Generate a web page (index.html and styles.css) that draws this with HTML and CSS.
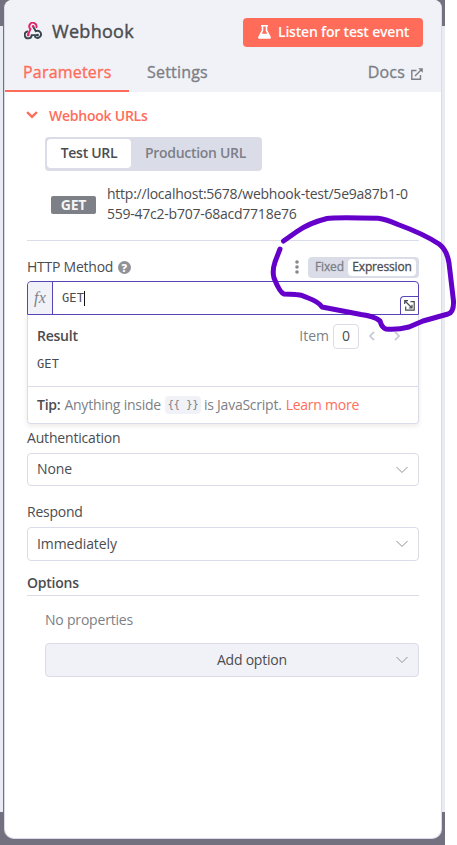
FILE: index.html
```html
<!DOCTYPE html>
<html lang="en">
<head>
<meta charset="utf-8">
<title>Webhook</title>
<link rel="stylesheet" href="styles.css">
</head>
<body>
<div class="backdrop">
<main class="panel">
  <header class="header">
    <div class="title-row">
      <svg class="logo" viewBox="0 0 18 18" fill="none" stroke-width="1.9" stroke-linecap="round">
        <path d="M12.4 5.2A3.6 3.6 0 1 0 6.5 7L4 12.6" stroke="#e0246c"/>
        <path d="M9.1 4.5L11.8 9.2A3.5 3.5 0 1 1 11 14.8" stroke="#37474f"/>
        <path d="M3.3 9.5A3.5 3.5 0 1 0 7.700 13.1H13.4" stroke="#37474f"/>
        <circle cx="9.1" cy="4.3" r="1.2" fill="#e0246c"/><circle cx="4.2" cy="13" r="1.4" fill="#e0246c"/><circle cx="13.6" cy="13.1" r="1.3" fill="#37474f"/>
      </svg>
      <h1>Webhook</h1>
      <button class="listen">
        <svg width="13" height="14" viewBox="0 0 13 14"><path fill="#fff" fill-rule="evenodd" d="M3 0h7v1.5h-.7v3.8l3.3 6.2c.7 1.3.1 2.3-1.1 2.3h-10c-1.2 0-1.8-1-1.1-2.3l3.3-6.2V1.500H3zM5.300 1.500v4.200L3.800 8.700h5.400L7.700 5.700V1.500z"/></svg>
        <span>Listen for test event</span>
      </button>
    </div>
    <nav class="tabs">
      <span class="tab active">Parameters</span>
      <span class="tab">Settings</span>
      <span class="tab docs">Docs
        <svg width="12" height="12" viewBox="0 0 12 12" fill="none" stroke="#7d7f86" stroke-width="1.400"><path d="M5.500 2.500H.8v8.700h8.700V7M4 8l6.300-6.300"/><path d="M7.200.2h4.600v4.600z" fill="#7d7f86" stroke="none"/></svg>
      </span>
    </nav>
  </header>
  <section class="body">
    <div class="urls-title">
      <svg width="12" height="8" viewBox="0 0 12 8" fill="none" stroke="#ff6d5a" stroke-width="2.400"><path d="M1.100 1.200L6 5.800l4.900-4.600"/></svg>
      <span>Webhook URLs</span>
    </div>
    <div class="url-switch"><span class="on">Test URL</span><span>Production URL</span></div>
    <div class="url-row">
      <span class="verb">GET</span>
      <span class="url">http://localhost:5678/webhook-test/5e9a87b1-0<br>559-47c2-b707-68acd7718e76</span>
    </div>
    <div class="method-head">
      <span class="label">HTTP Method</span>
      <span class="help">?</span>
      <svg class="dots" width="4" height="14" viewBox="0 0 4 14" fill="#85878d"><circle cx="2" cy="2" r="1.800"/><circle cx="2" cy="7" r="1.800"/><circle cx="2" cy="12" r="1.800"/></svg>
      <div class="mode"><span>Fixed</span><span class="on">Expression</span></div>
    </div>
    <div class="expr">
      <span class="fx">fx</span>
      <span class="code">GET</span><i class="caret"></i>
      <span class="expand"><svg width="11" height="11" viewBox="0 0 11 11" fill="none" stroke="#4b4c50" stroke-width="1.200"><path d="M1 1l7 7M.7 4V.7H4M6.500 1.700h3.700v8.500H1.700V6.500M8 4.800V8H4.800"/></svg></span>
    </div>
    <div class="result">
      <div class="result-head">
        <b>Result</b><span class="item">Item</span><span class="index">0</span>
        <svg width="8" height="10" viewBox="0 0 8 10" fill="none" stroke="#c4c8d4" stroke-width="1.700"><path d="M6 .8L2 5l4 4.200"/></svg>
        <svg width="8" height="10" viewBox="0 0 8 10" fill="none" stroke="#c4c8d4" stroke-width="1.700"><path d="M2 .8L6 5 2 9.200"/></svg>
      </div>
      <div class="result-value">GET</div>
      <div class="tip"><b>Tip:</b><span>Anything inside</span><code>{{ }}</code><span>is JavaScript.</span><a>Learn more</a></div>
    </div>
    <div class="label auth-label">Authentication</div>
    <div class="select">None<svg class="chev" viewBox="0 0 14 8"><path d="M1.500 1L7 6.500 12.500 1"/></svg></div>
    <div class="label respond-label">Respond</div>
    <div class="select tall">Immediately<svg class="chev" viewBox="0 0 14 8"><path d="M1.500 1L7 6.500 12.500 1"/></svg></div>
    <div class="options-title">Options</div>
    <div class="none">No properties</div>
    <div class="select add"><span>Add option</span><svg class="chev" viewBox="0 0 14 8"><path d="M1.500 1L7 6.500 12.500 1"/></svg></div>
  </section>
</main>
</div>
<svg class="scribble" viewBox="0 0 457 845" fill="none" stroke="#6500cb" stroke-width="5" stroke-linecap="round" stroke-linejoin="round">
  <path d="M283.500 241L297 231.500Q309 223 327 218.500Q334 217 378 218.200Q386 219 398 224.500Q424 234 439 244Q447 250 449 263L453.500 301Q454 312 448 314L423 321L409 327Q397 330 386 329Q382 328 380 321Q374 316 361 314.500L322 307Q319 302 307 297.500Q301 294.500 296 294.500L284 294Q280 293 274 278Q272 271 275 262L280 249"/>
</svg>
</body>
</html>
```
FILE: styles.css
```css
* { box-sizing: border-box; }
body { margin: 0; width: 457px; height: 845px; overflow: hidden; background: #fff; font: 14px/20px "Open Sans", sans-serif; letter-spacing: -.24px; color: #4b4c50; }
.backdrop { width: 445px; height: 845px; padding-left: 4px; background: linear-gradient(#737180 26px, #e9ebf2 26px, #e9ebf2 812px, #737180 812px); }
.panel { width: 438px; height: 839px; border: 1px solid #d9dce8; border-top: 0; border-radius: 8px 8px 10px 10px; background: #fff; overflow: hidden; box-shadow: -1px 0 #737180; }
.header { height: 92px; background: #f1f2f7; }
.title-row { display: flex; align-items: center; height: 63px; padding: 0 18px 0 19px; }
.logo { width: 18px; height: 18px; margin-top: -2px; }
h1 { margin: -2px auto 0 10px; font-size: 18px; line-height: 24px; font-weight: 500; letter-spacing: .3px; -webkit-text-stroke: .4px; }
.listen { display: flex; align-items: center; gap: 7px; width: 180px; height: 29px; margin-top: 1px; padding: 0 0 0 15px; border: 0; border-radius: 4px; background: #ff6d5a; color: #fff; font: 600 14px/20px "Open Sans", sans-serif; letter-spacing: -.2px; white-space: nowrap; }
.tabs { display: flex; height: 29px; font-size: 16px; line-height: 18px; font-weight: 500; letter-spacing: .2px; color: #7d7f86; -webkit-text-stroke: .35px; }
.active { width: 124px; padding-left: 18px; border-bottom: 2px solid #ff6d5a; color: #ff6d5a; }
.tab:nth-child(2) { margin-left: 18px; }
.docs { display: flex; gap: 6px; margin: 0 18px 0 auto; }
.docs svg { margin-top: 5px; }
.body { padding: 14px 22px 0; }
.urls-title { display: flex; align-items: center; gap: 11px; height: 20px; margin-left: -1px; color: #ff6d5a; font-weight: 600; }
.urls-title svg { margin-top: -2px; }
.url-switch { display: flex; width: 217px; height: 34px; margin: 11px 0 0 18px; padding: 2px; border-radius: 4px; background: #dadde8; color: #7d7f88; font-weight: 600; line-height: 27px; letter-spacing: -.3px; }
.url-switch span { flex: 1; text-align: center; }
.url-switch .on { flex: 0 0 84px; border-radius: 4px; background: #fff; color: #4b4c50; height: 29px; }
.url-row { display: flex; align-items: center; gap: 11px; height: 70px; padding: 0 0 3px 24px; border-bottom: 1px solid #dadde8; white-space: nowrap; }
.verb { width: 45px; height: 18px; margin-top: 2px; border-radius: 2px; background: #7d8087; color: #f5f5f5; text-align: center; font-weight: 700; line-height: 18px; }
.method-head { display: flex; align-items: center; height: 40px; padding-top: 12px; }
.help { width: 13px; height: 13px; margin-left: 4.5px; border-radius: 50%; background: #919297; color: #fff; font-size: 11px; font-weight: 800; line-height: 13px; text-align: center; }
.dots { margin-left: auto; margin-right: 9px; }
.mode { display: flex; width: 111px; height: 21px; padding: 2px; border-radius: 4px; background: #dadde8; color: #7d7f86; font-size: 12px; line-height: 16px; font-weight: 500; letter-spacing: -.15px; -webkit-text-stroke: .3px; }
.mode span:first-child { width: 38px; padding-left: 5px; }
.mode .on { width: 68px; border-radius: 4px; background: #fff; color: #4b4c50; text-align: center; }
.expr { position: relative; display: flex; align-items: center; height: 34px; border: 1px solid #5545b8; border-radius: 4px 4px 0 0; }
.fx { width: 25px; height: 32px; border-right: 1px solid #5545b8; background: #f1f2f7; border-radius: 4px 0 0; text-align: center; font: italic 16px/31px "Liberation Serif", serif; letter-spacing: .3px; color: #7d7f86; }
.code { margin-left: 9px; }
.code, .result-value { font-family: "DejaVu Sans Mono", monospace; font-size: 12px; letter-spacing: .1px; }
.caret { width: 1px; height: 15px; background: #111; }
.expand { position: absolute; right: 0; bottom: 0; display: grid; place-items: center; width: 18px; height: 18px; border: 1px solid #5545b8; border-width: 1px 0 0 1px; border-radius: 4px 0 0; }
.result { height: 109px; border: 1px solid #dadde8; border-top: 0; border-radius: 0 0 4px 4px; box-shadow: 0 2px 5px #441c0018; }
.result-head { display: flex; align-items: center; height: 42px; padding: 0 17px 0 9px; }
.result-head b, .tip b, .options-title { font-weight: 600; }
.tip b { color: #4b4c50; }
.item { margin-left: auto; color: #7d7f86; letter-spacing: 0; }
.index { width: 26px; height: 25px; margin: 0 9px 0 4px; border: 1px solid #dadde8; border-radius: 4px; text-align: center; line-height: 22px; }
.result-head svg + svg { margin-left: 17px; }
.result-value { height: 29px; padding-left: 9px; line-height: 14px; }
.tip { display: flex; align-items: center; height: 37px; padding-left: 9px; border-top: 1px solid #dadde8; color: #7d7f86; gap: 4px; white-space: nowrap; }
.tip code { width: 36px; height: 18px; border-radius: 4px; background: #f1f2f7; font: 11px/18px "DejaVu Sans Mono", monospace; letter-spacing: -.4px; text-align: center; }
.tip code + span { margin-left: -1px; }
.tip a { color: #ff6d5a; }
.auth-label { margin-top: 4px; letter-spacing: -.18px; }
.select { display: flex; align-items: center; height: 33px; padding: 0 9px 1px; border: 1px solid #dadde8; border-radius: 4px; letter-spacing: -.1px; }
.auth-label + .select { margin-top: 5px; }
.chev { width: 14px; height: 8px; margin: 1px 0 0 auto; fill: none; stroke: #919297; }
.respond-label { margin-top: 16px; }
.tall { height: 34px; margin-top: 5px; letter-spacing: -.1px; }
.options-title { height: 23px; margin-top: 12px; border-bottom: 1px solid #dadde8; }
.none { margin: 14px 0 0 18px; color: #7d7f86; letter-spacing: -.2px; }
.add { height: 34px; margin: 13px 0 0 18px; background: #f1f2f7; letter-spacing: -.24px; }
.add span { margin-left: 162px; }
.scribble { position: absolute; left: 0; top: 0; width: 457px; height: 845px; pointer-events: none; }
```
